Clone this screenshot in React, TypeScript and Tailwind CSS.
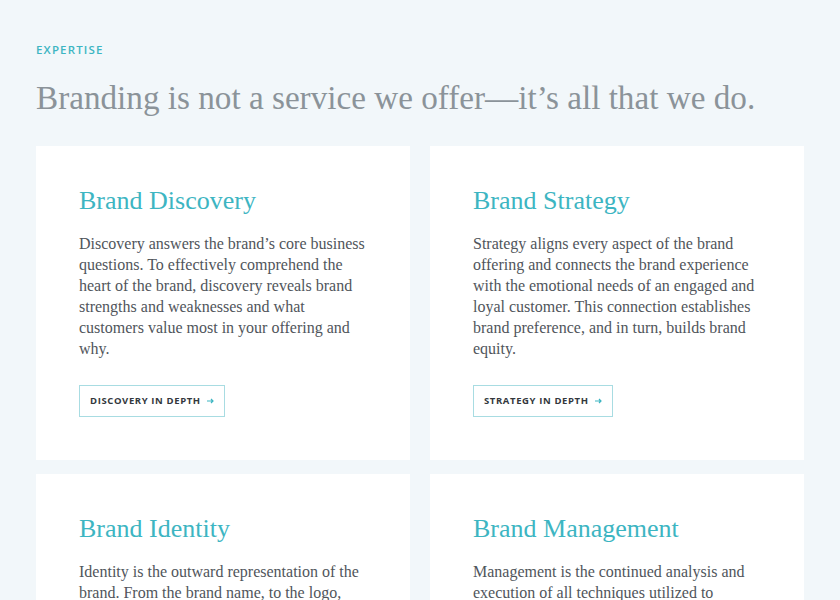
import React from 'react';

const services = [
  {
    title: 'Brand Discovery',
    body: 'Discovery answers the brand’s core business questions. To effectively comprehend the heart of the brand, discovery reveals brand strengths and weaknesses and what customers value most in your offering and why.',
    cta: 'Discovery in depth',
  },
  {
    title: 'Brand Strategy',
    body: 'Strategy aligns every aspect of the brand offering and connects the brand experience with the emotional needs of an engaged and loyal customer. This connection establishes brand preference, and in turn, builds brand equity.',
    cta: 'Strategy in depth',
  },
  {
    title: 'Brand Identity',
    body: 'Identity is the outward representation of the brand. From the brand name, to the logo, typography, color and voice, identity is how customers recognize and remember you.',
    cta: 'Identity in depth',
  },
  {
    title: 'Brand Management',
    body: 'Management is the continued analysis and execution of all techniques utilized to increase the perceived value of the brand over time and keep it consistent.',
    cta: 'Management in depth',
  },
];

const Arrow = () => (
  <svg width="7" height="6" viewBox="0 0 7 6" fill="none" className="text-[#3db5c2]">
    <path d="M0 3h6M4 1l2 2-2 2" stroke="currentColor" strokeWidth="1.2" />
  </svg>
);

const ServiceCard = ({ title, body, cta }: { title: string; body: string; cta: string }) => (
  <div className="bg-white px-[43px] pt-[39px] pb-[43px]">
    <h3 className="text-[26px] leading-[32px] text-[#3db5c2] font-['Liberation_Serif',serif]">
      {title}
    </h3>
    <p className="mt-[16px] text-[16px] leading-[21px] text-[#50555b] font-['Liberation_Serif',serif]">
      {body}
    </p>
    <a
      href="#"
      className="mt-[26px] inline-flex items-center gap-[6px] h-[32px] px-[10px] border border-[#a8dce2] text-[9.5px] font-bold uppercase tracking-[0.065em] text-[#33383d] font-['Open_Sans',sans-serif]"
    >
      {cta}
      <Arrow />
    </a>
  </div>
);

export default function App() {
  return (
    <section className="min-h-[600px] bg-[#f2f7fa] px-[36px] pt-[41px] pb-10">
      <span className="block text-[11.5px] font-semibold uppercase tracking-[0.1em] text-[#3db5c2] font-['Open_Sans',sans-serif]">
        Expertise
      </span>
      <h2 className="mt-[20px] text-[33.2px] leading-[40px] text-[#8b9399] font-['Liberation_Serif',serif]">
        Branding is not a service we offer—it’s all that we do.
      </h2>
      <div className="mt-[28px] grid grid-cols-2 gap-x-[20px] gap-y-[14px]">
        {services.map((s) => (
          <ServiceCard key={s.title} {...s} />
        ))}
      </div>
    </section>
  );
}
